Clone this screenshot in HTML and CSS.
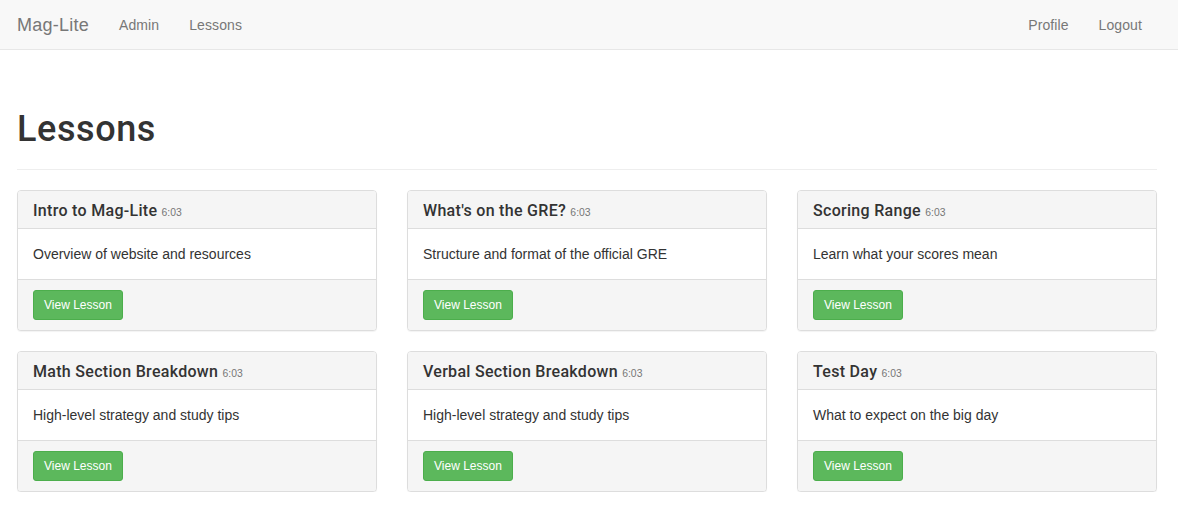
FILE: index.html
```html
<!DOCTYPE html>
<html>
<head>
<meta charset="utf-8">
<link rel="stylesheet" href="styles.css">
</head>
<body>
<nav class="navbar">
  <div class="nav-inner">
    <a class="brand" href="#">Mag-Lite</a>
    <ul class="nav">
      <li><a href="#">Admin</a></li>
      <li><a href="#">Lessons</a></li>
    </ul>
    <ul class="nav nav-right">
      <li><a href="#">Profile</a></li>
      <li><a href="#">Logout</a></li>
    </ul>
  </div>
</nav>
<main class="container">
  <div class="page-header"><h1>Lessons</h1></div>
  <div class="grid">
    <div class="panel">
      <div class="panel-heading"><h3 class="panel-title">Intro to Mag-Lite <small>6:03</small></h3></div>
      <div class="panel-body">Overview of website and resources</div>
      <div class="panel-footer"><a class="btn" href="#">View Lesson</a></div>
    </div>
    <div class="panel">
      <div class="panel-heading"><h3 class="panel-title">What's on the GRE? <small>6:03</small></h3></div>
      <div class="panel-body">Structure and format of the official GRE</div>
      <div class="panel-footer"><a class="btn" href="#">View Lesson</a></div>
    </div>
    <div class="panel">
      <div class="panel-heading"><h3 class="panel-title">Scoring Range <small>6:03</small></h3></div>
      <div class="panel-body">Learn what your scores mean</div>
      <div class="panel-footer"><a class="btn" href="#">View Lesson</a></div>
    </div>
    <div class="panel">
      <div class="panel-heading"><h3 class="panel-title">Math Section Breakdown <small>6:03</small></h3></div>
      <div class="panel-body">High-level strategy and study tips</div>
      <div class="panel-footer"><a class="btn" href="#">View Lesson</a></div>
    </div>
    <div class="panel">
      <div class="panel-heading"><h3 class="panel-title">Verbal Section Breakdown <small>6:03</small></h3></div>
      <div class="panel-body">High-level strategy and study tips</div>
      <div class="panel-footer"><a class="btn" href="#">View Lesson</a></div>
    </div>
    <div class="panel">
      <div class="panel-heading"><h3 class="panel-title">Test Day <small>6:03</small></h3></div>
      <div class="panel-body">What to expect on the big day</div>
      <div class="panel-footer"><a class="btn" href="#">View Lesson</a></div>
    </div>
  </div>
</main>
</body>
</html>
```
FILE: styles.css
```css
* { box-sizing: border-box; }
html, body { margin: 0; padding: 0; }
body {
  font-family: "Liberation Sans", Arial, Helvetica, sans-serif;
  font-size: 14px;
  line-height: 20px;
  color: #333;
  background: #fff;
}
a { text-decoration: none; }

.navbar {
  height: 50px;
  background: #f8f8f8;
  border-bottom: 1px solid #e7e7e7;
}
.nav-inner {
  display: flex;
  padding: 0 21px 0 2px;
}
.brand {
  font-size: 18px;
  line-height: 20px;
  padding: 15px;
  color: #777;
  letter-spacing: 0.25px;
}
.nav {
  list-style: none;
  margin: 0;
  padding: 0;
  display: flex;
}
.nav a {
  display: block;
  padding: 15px;
  line-height: 20px;
  color: #777;
  letter-spacing: 0.1px;
}
.nav-right { margin-left: auto; }

.container {
  padding: 20px 21px 0 17px;
}
.page-header {
  margin: 40px 0 20px;
  padding-bottom: 9px;
  border-bottom: 1px solid #eee;
}
.page-header h1 {
  margin: 0 0 10px;
  font-family: Roboto, "Liberation Sans", Arial, sans-serif;
  font-size: 36px;
  line-height: 39.6px;
  font-weight: 500;
  letter-spacing: 0.6px;
  color: #333;
}

.grid {
  display: grid;
  grid-template-columns: repeat(3, 1fr);
  column-gap: 30px;
  row-gap: 20px;
}
.panel {
  border: 1px solid #ddd;
  border-radius: 4px;
  background: #fff;
  box-shadow: 0 1px 1px rgba(0,0,0,.05);
}
.panel-heading {
  background: #f5f5f5;
  border-bottom: 1px solid #ddd;
  padding: 11px 15px 9px;
  border-radius: 3px 3px 0 0;
}
.panel-title {
  margin: 0;
  font-family: Roboto, "Liberation Sans", Arial, sans-serif;
  font-size: 16px;
  line-height: 17px;
  font-weight: 500;
  letter-spacing: 0.3px;
  color: #333;
}
.panel-title small {
  font-family: "Liberation Sans", Arial, sans-serif;
  font-size: 65%;
  line-height: 1;
  letter-spacing: 0;
  color: #777;
  font-weight: 400;
}
.panel-body {
  padding: 15px;
}
.panel-footer {
  background: #f5f5f5;
  border-top: 1px solid #ddd;
  padding: 10px 15px;
  border-radius: 0 0 3px 3px;
}
.btn {
  display: inline-block;
  padding: 5px 10px;
  font-size: 12px;
  line-height: 18px;
  border-radius: 3px;
  color: #fff;
  background: #5cb85c;
  border: 1px solid #4cae4c;
}
```
